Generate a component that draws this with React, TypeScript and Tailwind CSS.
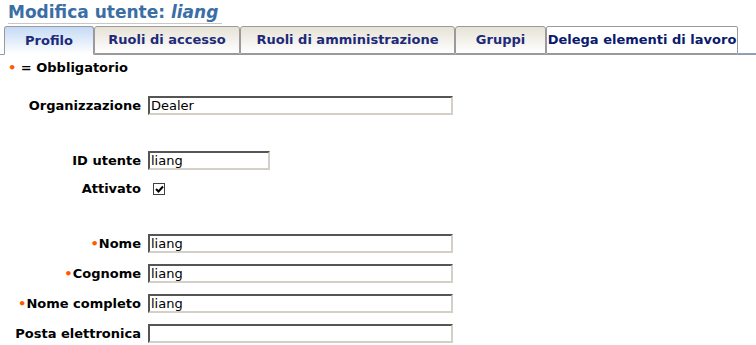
import React from 'react';

const font = { fontFamily: 'Verdana, "DejaVu Sans", sans-serif' };

function Field({ label, value, required, width = 'w-[305px]' }: { label: string; value: string; required?: boolean; width?: string }) {
  return (
    <div className="flex items-center h-[19px]">
      <label className="w-[148px] shrink-0 text-right pr-[7px] text-[13px] font-bold text-black whitespace-nowrap">
        {required && <span className="text-[#ff5a00] text-[13px]">•</span>}
        {label}
      </label>
      <input
        type="text"
        defaultValue={value}
        className={`${width} h-[19px] px-[1px] text-[13px] text-black bg-white border-2 border-t-[#555] border-l-[#555] border-b-[#d4d0c8] border-r-[#d4d0c8] outline-none`}
        style={font}
      />
    </div>
  );
}

export default function App() {
  const tabs = [
    { name: 'Profilo', w: 'w-[90px]' },
    { name: 'Ruoli di accesso', w: 'w-[146px]' },
    { name: 'Ruoli di amministrazione', w: 'w-[215px]' },
    { name: 'Gruppi', w: 'w-[91px]' },
  ];
  return (
    <div className="w-[756px] h-[345px] bg-white overflow-hidden" style={font}>
      <div className="px-[8px] pt-[1px]">
        <h1 className="text-[17px] font-bold text-[#3a6ea5] leading-[22px] border-b border-[#c8c8c8] w-fit pr-1">
          Modifica utente: <i>liang</i>
        </h1>
      </div>

      {/* Tabs */}
      <div className="flex items-end mt-[3px] pl-[4px] border-b border-[#9a9a9a] h-[28px]">
        {tabs.map((t, i) => (
          <div
            key={t.name}
            className={`${t.w} h-[28px] flex items-center justify-center text-[13px] font-bold text-[#1d2a7a] border border-[#9a9a9a] rounded-t-[3px] ${
              i === 0
                ? 'bg-gradient-to-b from-[#c4daf5] to-white border-b-white -mb-px h-[29px]'
                : 'bg-gradient-to-b from-[#e6e2d6] to-white'
            }`}
          >
            {t.name}
          </div>
        ))}
        <div
          className="w-[192px] h-[28px] flex items-center justify-center text-[13px] font-bold text-[#0a1a6e] bg-white border border-[#9a9a9a] rounded-t-[2px]"
          style={{ fontFamily: 'Tahoma, "DejaVu Sans", sans-serif' }}
        >
          Delega elementi di lavoro
        </div>
        <div className="flex-1 h-[28px] border-b border-[#8aa0d0]" />
      </div>

      <div className="pl-[8px] pt-[5px] text-[13px] font-bold text-black leading-[16px]">
        <span className="text-[#ff5a00] text-[13px]">•</span> = Obbligatorio
      </div>

      <div className="mt-[20px]">
        <Field label="Organizzazione" value="Dealer" />
      </div>

      <div className="mt-[36px]">
        <Field label="ID utente" value="liang" width="w-[122px]" />
      </div>

      <div className="flex items-center h-[16px] mt-[11px]">
        <label className="w-[148px] shrink-0 text-right pr-[7px] text-[13px] font-bold text-black">Attivato</label>
        <span className="ml-[5px] w-[12px] h-[12px] border border-[#404040] bg-white flex items-center justify-center">
          <svg width="9" height="9" viewBox="0 0 9 9">
            <path d="M1 4 L3.5 6.5 L8 1.5" stroke="#000" strokeWidth="2" fill="none" />
          </svg>
        </span>
      </div>

      <div className="mt-[37px] flex flex-col gap-[11px]">
        <Field label="Nome" value="liang" required />
        <Field label="Cognome" value="liang" required />
        <Field label="Nome completo" value="liang" required />
        <Field label="Posta elettronica" value="" />
      </div>
    </div>
  );
}
